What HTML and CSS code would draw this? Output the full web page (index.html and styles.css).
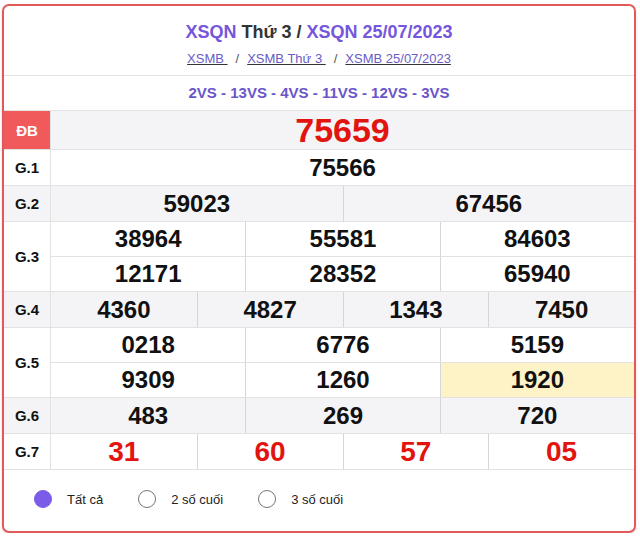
FILE: index.html
```html
<!DOCTYPE html>
<html lang="vi">
<head>
<meta charset="utf-8">
<title>XSQN 25/07/2023</title>
<link rel="stylesheet" href="styles.css">
</head>
<body>
<div class="card">
  <div class="head">
    <h2 class="title"><span class="hl">XSQN</span> Thứ 3 / <span class="hl">XSQN 25/07/2023</span></h2>
    <div class="crumbs"><a href="#">XSMB </a><span class="sep">/</span><a href="#">XSMB Thứ 3 </a><span class="sep">/</span><a href="#">XSMB 25/07/2023</a></div>
  </div>
  <div class="codes">2VS - 13VS - 4VS - 11VS - 12VS - 3VS</div>

  <div class="row db">
    <div class="lbl">ĐB</div>
    <div class="vals c1"><div class="v big">75659</div></div>
  </div>
  <div class="row">
    <div class="lbl">G.1</div>
    <div class="vals c1"><div class="v">75566</div></div>
  </div>
  <div class="row alt">
    <div class="lbl">G.2</div>
    <div class="vals c2"><div class="v">59023</div><div class="v">67456</div></div>
  </div>
  <div class="row">
    <div class="lbl">G.3</div>
    <div class="vals c3 two">
      <div class="v">38964</div><div class="v">55581</div><div class="v">84603</div>
      <div class="v">12171</div><div class="v">28352</div><div class="v">65940</div>
    </div>
  </div>
  <div class="row alt">
    <div class="lbl">G.4</div>
    <div class="vals c4"><div class="v">4360</div><div class="v">4827</div><div class="v">1343</div><div class="v">7450</div></div>
  </div>
  <div class="row">
    <div class="lbl">G.5</div>
    <div class="vals c3 two">
      <div class="v">0218</div><div class="v">6776</div><div class="v">5159</div>
      <div class="v">9309</div><div class="v">1260</div><div class="v mark">1920</div>
    </div>
  </div>
  <div class="row alt">
    <div class="lbl">G.6</div>
    <div class="vals c3"><div class="v">483</div><div class="v">269</div><div class="v">720</div></div>
  </div>
  <div class="row">
    <div class="lbl">G.7</div>
    <div class="vals c4"><div class="v red">31</div><div class="v red">60</div><div class="v red">57</div><div class="v red">05</div></div>
  </div>

  <div class="opts">
    <label class="opt"><span class="dot on"></span>Tất cả</label>
    <label class="opt"><span class="dot"></span>2 số cuối</label>
    <label class="opt"><span class="dot"></span>3 số cuối</label>
  </div>
</div>
</body>
</html>
```

FILE: styles.css
```css
* { box-sizing: border-box; }
html, body { margin: 0; padding: 0; background: #fff; }
body { font-family: "Liberation Sans", Arial, sans-serif; color: #111; }

.card {
  margin: 4px 4px 0 2px;
  height: 529px;
  border: 2px solid #e05a5a;
  border-radius: 7px;
  background: #fff;
  overflow: hidden;
  box-shadow: 0 1px 3px rgba(224, 90, 90, 0.25);
}

.head {
  padding: 15px 0 7px;
  border-bottom: 1px solid #e4e4e4;
  text-align: center;
}
.title {
  margin: 0;
  font-size: 18px;
  line-height: 22px;
  font-weight: bold;
  color: #333;
}
.title .hl { color: #7556dc; }
.crumbs {
  margin-top: 7px;
  font-size: 13px;
  line-height: 18px;
  color: #555;
}
.crumbs a { color: #6a5bc6; text-decoration: underline; text-decoration-color: #333; }
.crumbs .sep { margin: 0 8px; color: #555; }

.codes {
  height: 35px;
  line-height: 34px;
  border-bottom: 1px solid #e4e4e4;
  text-align: center;
  font-size: 15px;
  font-weight: bold;
  color: #6a56c9;
}

.row {
  display: flex;
  border-bottom: 1px solid #e2e2e2;
  height: 36px;
}
.row.alt { background: #f4f4f6; }
.row .lbl {
  width: 47px;
  flex: none;
  border-right: 1px solid #e2e2e2;
  display: flex;
  align-items: center;
  justify-content: center;
  font-size: 15px;
  font-weight: bold;
  color: #111;
}
.row.db { height: 39px; background: #f4f4f6; }
.row.db .lbl { background: #f05a5a; color: #fff; border-right-color: #e2e2e2; }

.vals { flex: 1; display: grid; }
.c1 { grid-template-columns: 1fr; }
.c2 { grid-template-columns: 1fr 1fr; }
.c3 { grid-template-columns: 1fr 1fr 1fr; }
.c4 { grid-template-columns: 1fr 1fr 1fr 1fr; }

.row:has(.two) { height: 70px; }
.two { grid-template-rows: 1fr 1fr; }
.two .v:nth-child(-n+3) { border-bottom: 1px solid #e2e2e2; }

.v {
  display: flex;
  align-items: center;
  justify-content: center;
  font-size: 24px;
  font-weight: bold;
  color: #111;
  border-left: 1px solid #d6d6d6;
}
.c3 .v:nth-child(3n+1), .c1 .v, .c2 .v:first-child, .c4 .v:first-child { border-left: none; }
.v.big { font-size: 34px; color: #e2140f; }
.v.red { font-size: 28px; color: #e2140f; }
.v.mark { background: #fdf3c6; }

.opts {
  display: flex;
  align-items: center;
  height: 60px;
  padding-left: 30px;
  padding-bottom: 2px;
}
.opt {
  display: flex;
  align-items: center;
  font-size: 13px;
  color: #222;
  margin-right: 35px;
}
.dot {
  width: 18px;
  height: 18px;
  border-radius: 50%;
  border: 1px solid #777;
  margin-right: 15px;
  background: #fff;
}
.dot.on { background: #7b5ce9; border-color: #7b5ce9; }
```
